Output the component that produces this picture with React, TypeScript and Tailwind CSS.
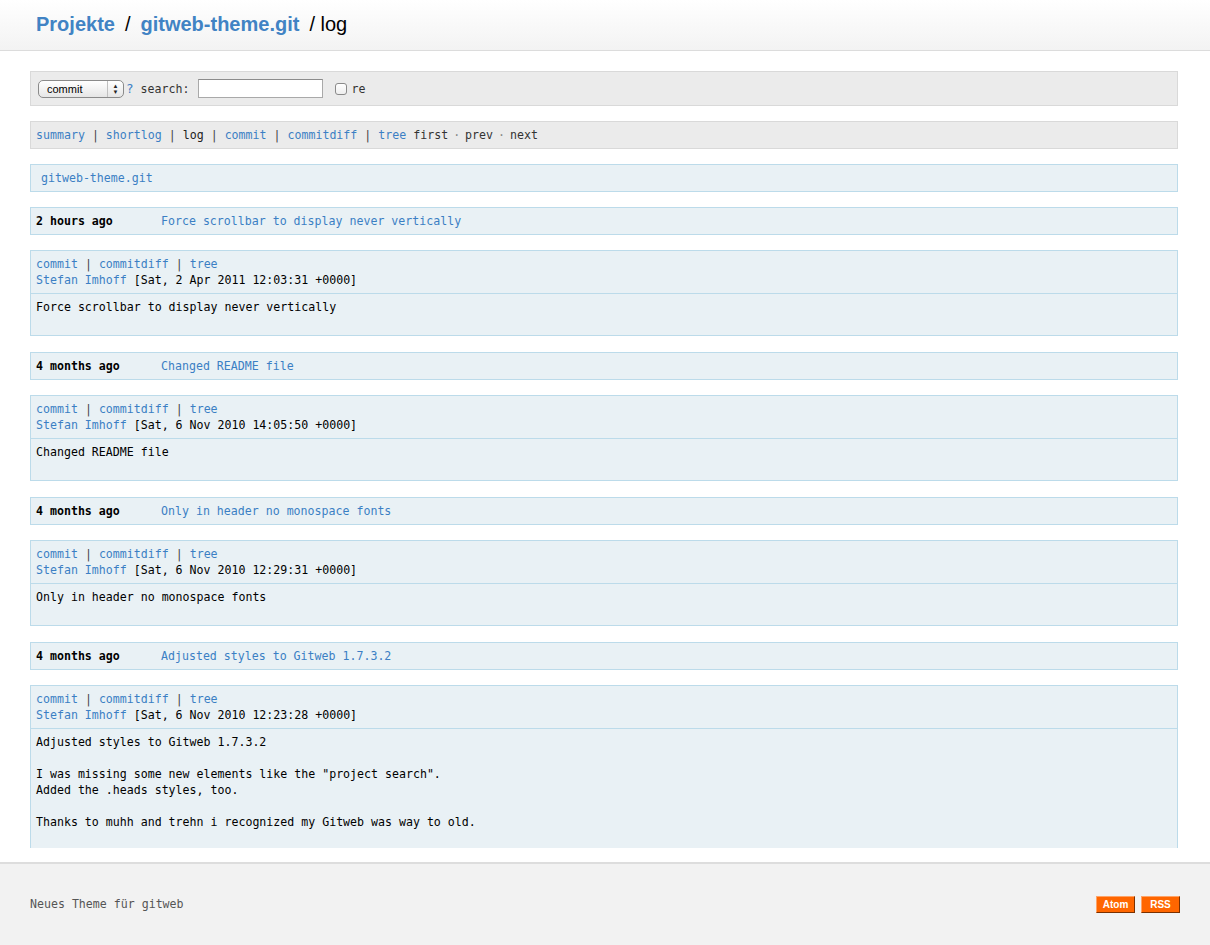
import React from "react";

const mono = { fontFamily: '"DejaVu Sans Mono", "Liberation Mono", monospace' };

type Commit = {
  age: string;
  title: string;
  author: string;
  date: string;
  message: string[];
};

const commits: Commit[] = [
  {
    age: "2 hours ago",
    title: "Force scrollbar to display never vertically",
    author: "Stefan Imhoff",
    date: "[Sat, 2 Apr 2011 12:03:31 +0000]",
    message: ["Force scrollbar to display never vertically"],
  },
  {
    age: "4 months ago",
    title: "Changed README file",
    author: "Stefan Imhoff",
    date: "[Sat, 6 Nov 2010 14:05:50 +0000]",
    message: ["Changed README file"],
  },
  {
    age: "4 months ago",
    title: "Only in header no monospace fonts",
    author: "Stefan Imhoff",
    date: "[Sat, 6 Nov 2010 12:29:31 +0000]",
    message: ["Only in header no monospace fonts"],
  },
  {
    age: "4 months ago",
    title: "Adjusted styles to Gitweb 1.7.3.2",
    author: "Stefan Imhoff",
    date: "[Sat, 6 Nov 2010 12:23:28 +0000]",
    message: [
      "Adjusted styles to Gitweb 1.7.3.2",
      "",
      'I was missing some new elements like the "project search".',
      "Added the .heads styles, too.",
      "",
      "Thanks to muhh and trehn i recognized my Gitweb was way to old.",
      "",
      "",
    ],
  },
];

function Sep() {
  return <span className="text-[#444] px-[7px]">|</span>;
}

function CommitBlock({ c }: { c: Commit }) {
  return (
    <div className="flex flex-col">
      <div className="h-[28px] border border-[#bcdbea] bg-[#e9f1f5] flex items-center px-[5px]">
        <span className="w-[125px] font-bold text-black">{c.age}</span>
        <span className="text-[#3b7fc4]">{c.title}</span>
      </div>
      <div className="mt-[15px] border border-[#bcdbea] bg-[#e9f1f5]">
        <div className="px-[5px] pt-[5px] pb-[5px] border-b border-[#bcdbea] leading-[16px]">
          <div>
            <span className="text-[#3b7fc4]">commit</span>
            <Sep />
            <span className="text-[#3b7fc4]">commitdiff</span>
            <Sep />
            <span className="text-[#3b7fc4]">tree</span>
          </div>
          <div>
            <span className="text-[#3b7fc4]">{c.author}</span>{" "}
            <span className="text-black">{c.date}</span>
          </div>
        </div>
        <div className="px-[5px] pt-[5px] pb-[20px] leading-[16px] text-black">
          {c.message.map((l, i) => (
            <div key={i} className="h-[16px] whitespace-pre">
              {l}
            </div>
          ))}
        </div>
      </div>
    </div>
  );
}

export default function App() {
  return (
    <div className="w-[1210px] h-[945px] bg-white flex flex-col overflow-hidden">
      <header className="h-[51px] shrink-0 border-b border-[#dcdcdc] bg-gradient-to-b from-white to-[#f3f3f3] flex items-center pl-[36px] pb-[2px]">
        <div
          className="text-[20px] flex items-baseline gap-[10px]"
          style={{ fontFamily: '"Liberation Sans", Arial, sans-serif' }}
        >
          <span className="font-bold text-[#4183c4]">Projekte</span>
          <span className="text-black">/</span>
          <span className="font-bold text-[#4183c4]">gitweb-theme.git</span>
          <span className="text-black">/ log</span>
        </div>
      </header>

      <main
        className="flex-1 min-h-0 overflow-hidden pl-[30px] pr-[32px] pt-[20px] text-[11.6px] leading-[16px]"
        style={mono}
      >
        {/* search bar */}
        <div className="h-[35px] border border-[#d9d9d9] bg-[#ebebeb] flex items-center pl-[7px]">
          <div
            className="relative h-[18px] w-[86px] rounded-[5px] border border-[#8a8a8a] bg-gradient-to-b from-white to-[#e6e6e6] flex items-center pl-[8px] text-[11px] text-black"
            style={{ fontFamily: '"Liberation Sans", Arial, sans-serif' }}
          >
            commit
            <div className="absolute right-0 top-0 bottom-0 w-[16px] border-l border-[#c0c0c0] flex flex-col items-center justify-center text-[6px] leading-[6px] text-[#222]">
              <span>▲</span>
              <span>▼</span>
            </div>
          </div>
          <span className="ml-[2px] text-[#3b7fc4] text-[12.5px]">?</span>
          <span className="ml-[7px] text-[#333]">search:</span>
          <div className="ml-[9px] w-[125px] h-[19px] bg-white border border-[#a9a9a9] border-t-[#8c8c8c]" />
          <div className="ml-[12px] w-[12px] h-[12px] rounded-[3px] border border-[#8a8a8a] bg-gradient-to-b from-white to-[#eee]" />
          <span className="ml-[4px] text-[#333]">re</span>
        </div>

        {/* nav */}
        <div className="mt-[15px] h-[28px] border border-[#d9d9d9] bg-[#ebebeb] flex items-center px-[5px]">
          <span className="text-[#3b7fc4]">summary</span>
          <Sep />
          <span className="text-[#3b7fc4]">shortlog</span>
          <Sep />
          <span className="text-[#222]">log</span>
          <Sep />
          <span className="text-[#3b7fc4]">commit</span>
          <Sep />
          <span className="text-[#3b7fc4]">commitdiff</span>
          <Sep />
          <span className="text-[#3b7fc4]">tree</span>
          <span className="text-[#333] ml-[7px]">first</span>
          <span className="text-[#888] px-[5px]">·</span>
          <span className="text-[#333]">prev</span>
          <span className="text-[#888] px-[5px]">·</span>
          <span className="text-[#333]">next</span>
        </div>

        {/* project */}
        <div className="mt-[15px] h-[28px] border border-[#bcdbea] bg-[#e9f1f5] flex items-center px-[10px]">
          <span className="text-[#3b7fc4]">gitweb-theme.git</span>
        </div>

        <div className="mt-[15px] flex flex-col gap-[16px]">
          {commits.map((c, i) => (
            <CommitBlock key={i} c={c} />
          ))}
        </div>
      </main>

      <div className="h-[14px] shrink-0" />

      <footer
        className="h-[83px] shrink-0 border-t-2 border-[#dddddd] bg-[#f2f2f2] flex items-center justify-between pl-[30px] pr-[30px] text-[11.6px]"
        style={mono}
      >
        <span className="text-[#555]">Neues Theme für gitweb</span>
        <div
          className="flex gap-[6px]"
          style={{ fontFamily: '"Liberation Sans", Arial, sans-serif' }}
        >
          <span className="w-[39px] h-[17px] bg-[#ff6600] border border-[#ffa366] border-r-[#7a3000] border-b-[#7a3000] text-white font-bold text-[10px] flex items-center justify-center">
            Atom
          </span>
          <span className="w-[39px] h-[17px] bg-[#ff6600] border border-[#ffa366] border-r-[#7a3000] border-b-[#7a3000] text-white font-bold text-[10px] flex items-center justify-center">
            RSS
          </span>
        </div>
      </footer>
    </div>
  );
}
